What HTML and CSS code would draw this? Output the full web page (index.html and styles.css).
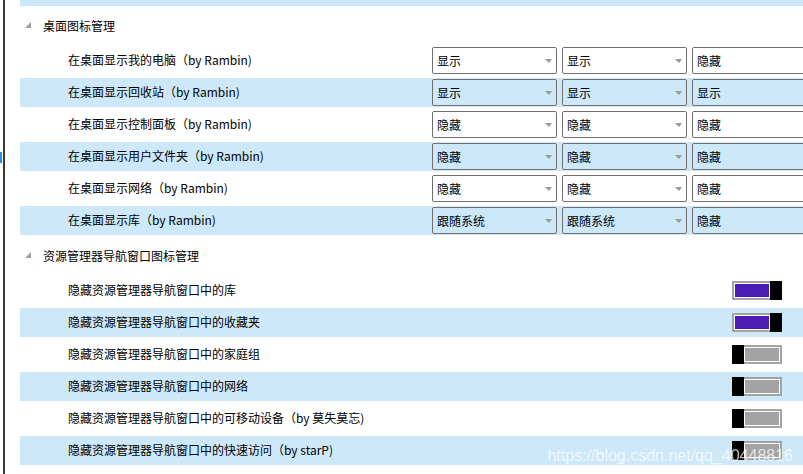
FILE: index.html
```html
<!DOCTYPE html>
<html lang="zh-CN">
<head>
  <meta charset="UTF-8" />
  <meta name="viewport" content="width=device-width, initial-scale=1" />
  <title>图标管理</title>
  <link rel="stylesheet" href="styles.css">
</head>
<body>
  <div class="frame">
    <div class="rail">
      <div class="rail-line"></div>
      <div class="rail-mark"></div>
    </div>

    <div class="content">
      <div class="band-top"></div>

      <!-- 桌面图标管理 -->
      <div class="group-head">
        <svg class="expander" width="6" height="6" viewBox="0 0 6 6"><polygon points="6,0 6,6 0,6" fill="#a0a0a0"/></svg>
        <span>桌面图标管理</span>
      </div>

      <div class="row">
        <span class="label">在桌面显示我的电脑（by Rambin)</span>
        <div class="combos">
          <div class="combo"><span>显示</span><i class="arrow"></i></div>
          <div class="combo"><span>显示</span><i class="arrow"></i></div>
          <div class="combo"><span>隐藏</span><i class="arrow"></i></div>
        </div>
      </div>
      <div class="row alt">
        <span class="label">在桌面显示回收站（by Rambin)</span>
        <div class="combos">
          <div class="combo"><span>显示</span><i class="arrow"></i></div>
          <div class="combo"><span>显示</span><i class="arrow"></i></div>
          <div class="combo"><span>显示</span><i class="arrow"></i></div>
        </div>
      </div>
      <div class="row">
        <span class="label">在桌面显示控制面板（by Rambin)</span>
        <div class="combos">
          <div class="combo"><span>隐藏</span><i class="arrow"></i></div>
          <div class="combo"><span>隐藏</span><i class="arrow"></i></div>
          <div class="combo"><span>隐藏</span><i class="arrow"></i></div>
        </div>
      </div>
      <div class="row alt">
        <span class="label">在桌面显示用户文件夹（by Rambin)</span>
        <div class="combos">
          <div class="combo"><span>隐藏</span><i class="arrow"></i></div>
          <div class="combo"><span>隐藏</span><i class="arrow"></i></div>
          <div class="combo"><span>隐藏</span><i class="arrow"></i></div>
        </div>
      </div>
      <div class="row">
        <span class="label">在桌面显示网络（by Rambin)</span>
        <div class="combos">
          <div class="combo"><span>隐藏</span><i class="arrow"></i></div>
          <div class="combo"><span>隐藏</span><i class="arrow"></i></div>
          <div class="combo"><span>隐藏</span><i class="arrow"></i></div>
        </div>
      </div>
      <div class="row alt">
        <span class="label">在桌面显示库（by Rambin)</span>
        <div class="combos">
          <div class="combo"><span>跟随系统</span><i class="arrow"></i></div>
          <div class="combo"><span>跟随系统</span><i class="arrow"></i></div>
          <div class="combo"><span>隐藏</span><i class="arrow"></i></div>
        </div>
      </div>

      <!-- 资源管理器导航窗口图标管理 -->
      <div class="group-head">
        <svg class="expander" width="6" height="6" viewBox="0 0 6 6"><polygon points="6,0 6,6 0,6" fill="#a0a0a0"/></svg>
        <span>资源管理器导航窗口图标管理</span>
      </div>

      <div class="row">
        <span class="label">隐藏资源管理器导航窗口中的库</span>
        <span class="toggle on"><span class="track"></span><span class="thumb"></span></span>
      </div>
      <div class="row alt">
        <span class="label">隐藏资源管理器导航窗口中的收藏夹</span>
        <span class="toggle on"><span class="track"></span><span class="thumb"></span></span>
      </div>
      <div class="row">
        <span class="label">隐藏资源管理器导航窗口中的家庭组</span>
        <span class="toggle off"><span class="thumb"></span><span class="track"></span></span>
      </div>
      <div class="row alt">
        <span class="label">隐藏资源管理器导航窗口中的网络</span>
        <span class="toggle off"><span class="thumb"></span><span class="track"></span></span>
      </div>
      <div class="row">
        <span class="label">隐藏资源管理器导航窗口中的可移动设备（by 莫失莫忘)</span>
        <span class="toggle off"><span class="thumb"></span><span class="track"></span></span>
      </div>
      <div class="row alt">
        <span class="label">隐藏资源管理器导航窗口中的快速访问（by starP)</span>
        <span class="toggle off"><span class="thumb"></span><span class="track"></span></span>
      </div>
    </div>

    <div class="watermark">https://blog.csdn.net/qq_40448816</div>
  </div>
</body>
</html>
```

FILE: styles.css
```css
body {
  margin: 0;
  background: #fff;
  font-family: "Noto Sans CJK SC", "Noto Sans", sans-serif;
  font-size: 12px;
  color: #000;
}
.frame {
  position: relative;
  display: flex;
  width: 803px;
  height: 474px;
  overflow: hidden;
}
.rail {
  position: relative;
  width: 20px;
  flex-shrink: 0;
}
.rail-line {
  margin-left: 3px;
  width: 2px;
  height: 100%;
  background: #3a3a3a;
}
.rail-mark {
  position: absolute;
  left: 0;
  top: 152px;
  width: 2px;
  height: 11px;
  background: #2f8ee0;
}
.content {
  flex: 1;
  min-width: 0;
  overflow: hidden;
}
.band-top {
  height: 6px;
  margin-bottom: 2px;
  background: #cce8f9;
}
.group-head {
  height: 38px;
  box-sizing: border-box;
  padding: 0 0 4px 5px;
  display: flex;
  align-items: center;
}
.expander {
  margin-right: 12px;
  margin-top: -1px;
}
.row {
  height: 29px;
  margin-bottom: 3px;
  display: flex;
  align-items: center;
  justify-content: space-between;
  padding-right: 21px;
  overflow: hidden;
}
.row.alt {
  background: #cce8f9;
}
.label {
  padding-left: 48px;
  margin-top: -2px;
  white-space: nowrap;
}
.combos {
  display: flex;
  gap: 5px;
  width: 371px;
  flex-shrink: 0;
  margin-right: -21px;
}
.combo {
  width: 125px;
  height: 27px;
  flex-shrink: 0;
  box-sizing: border-box;
  border: 1px solid #707070;
  border-radius: 2px;
  display: flex;
  align-items: center;
  justify-content: space-between;
  padding: 0 4px 1px 4px;
}
.arrow {
  width: 0;
  height: 0;
  margin-top: 1px;
  border-left: 4px solid transparent;
  border-right: 3px solid transparent;
  border-top: 4px solid #9a9a9a;
}
.toggle {
  display: flex;
  width: 50px;
  height: 19px;
  flex-shrink: 0;
}
.thumb {
  width: 12px;
  height: 19px;
  background: #000;
}
.track {
  flex: 1;
  box-sizing: border-box;
  border: 2px solid #a3a3a3;
  box-shadow: inset 0 0 0 1px #fff;
}
.toggle.on .track {
  border-right: 0;
  background: #4b1cb4;
}
.toggle.off .track {
  border-left: 0;
  background: #a3a3a3;
}
.watermark {
  position: absolute;
  right: 10px;
  top: 447px;
  font-family: "Liberation Sans", Arial, sans-serif;
  font-size: 16px;
  line-height: 18px;
  color: rgba(255, 255, 255, 0.75);
  white-space: nowrap;
}
```
